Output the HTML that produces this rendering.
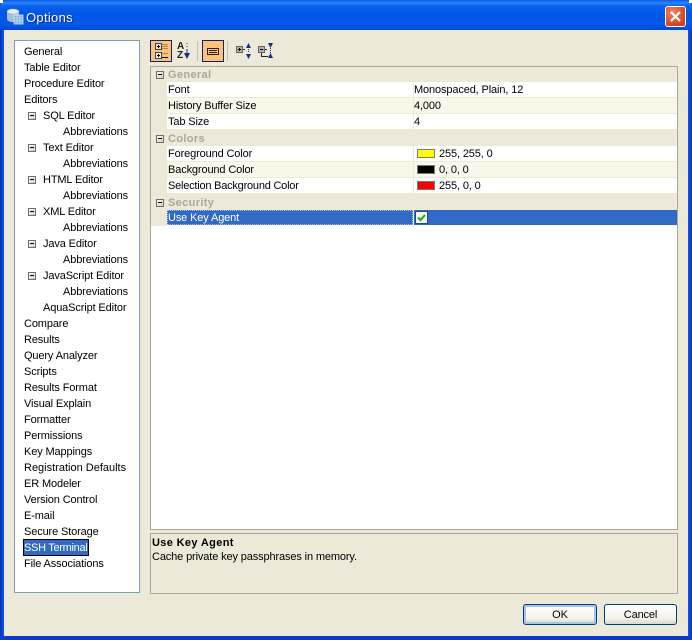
<!DOCTYPE html>
<html><head><meta charset="utf-8">
<style>
html,body{margin:0;padding:0;width:692px;height:640px;overflow:hidden;background:#ece9d8}
body{font:11px/16px "Liberation Sans",sans-serif;color:#000;position:relative;letter-spacing:-.13px}
.a{position:absolute}
.t{position:absolute;white-space:nowrap;height:16px;line-height:16px;margin-top:1px}
.box{position:absolute;width:8px;height:8px;box-sizing:border-box;border:1px solid #6e6e6e;background:linear-gradient(135deg,#fff,#cfcbbd)}
.box:after{content:"";position:absolute;left:1px;top:2px;width:4px;height:1px;background:#000}
.row{position:absolute;left:167px;width:510px;height:15px;background:#fff;border-bottom:1px solid #ece9d8}
.row.alt{background:#f7f8e8}
.sw{position:absolute;left:417px;width:16px;height:7px;border:1px solid #7a7a7a}
.g{position:absolute;left:168px;font-weight:bold;color:#aca899;line-height:16px;height:16px;margin-top:1px;letter-spacing:.35px}
.btn{position:absolute;top:604px;width:74px;height:21px;box-sizing:border-box;border:1px solid #003c74;border-radius:3px;background:linear-gradient(#fff,#f3f2ea 70%,#dcd8ca);text-align:center;line-height:20px}
</style></head><body>
<!-- window frame -->
<div class="a" style="left:0;top:0;width:692px;height:640px;background:#0a4fe0"></div>
<div class="a" style="left:0;top:0;width:692px;height:30px;border-radius:7px 7px 0 0;background:linear-gradient(#0a5ae8 0,#2a86f8 3px,#0a62ee 6px,#0055e6 14px,#0258ea 24px,#0049d8 30px)"></div>
<div class="a" style="left:0;top:0;width:3px;height:3px;background:#fff"></div>
<div class="a" style="right:0;top:0;width:3px;height:3px;background:#fff"></div>
<div class="a" style="left:4px;top:30px;width:684px;height:606px;background:#ece9d8"></div>
<div class="a" style="left:0;top:636px;width:692px;height:4px;background:#0a3cc8"></div>
<div class="a" style="left:0;top:30px;width:2px;height:606px;background:#0838c0"></div>
<div class="a" style="right:0;top:30px;width:2px;height:606px;background:#0838c0"></div>

<!-- title icon -->
<svg class="a" style="left:6px;top:8px" width="18" height="17" viewBox="0 0 18 17">
<ellipse cx="7" cy="3.5" rx="6" ry="2.5" fill="#e8f0f4" stroke="#9ab" stroke-width=".5"/>
<path d="M1 3.5V11C1 13 4 14 7 14H13V3.5C13 5 10 6 7 6S1 5 1 3.5Z" fill="#a4c0d4"/>
<rect x="8" y="7" width="9" height="9" fill="#7fb0e8" stroke="#d8e8f8" stroke-width=".8"/>
<path d="M8 10H17M8 13H17M11 7V16M14 7V16" stroke="#d8e8f8" stroke-width=".6"/>
</svg>
<div class="t" style="left:26px;top:9px;color:#fff;font-size:13px;text-shadow:1px 1px #0a2c98;letter-spacing:.3px">Options</div>

<!-- close button -->
<div class="a" style="left:665px;top:6px;width:21px;height:21px;box-sizing:border-box;border:1px solid #fff;border-radius:3px;background:radial-gradient(circle at 35% 30%,#ea8c6c,#d9502c 55%,#c03a14)"></div>
<svg class="a" style="left:665px;top:6px" width="21" height="21"><path d="M6 6L15 15M15 6L6 15" stroke="#fff" stroke-width="2.2"/></svg>

<!-- tree -->
<div class="a" style="left:14px;top:40px;width:124px;height:551px;background:#fff;border:1px solid #7f9db9"></div>
<div class="t" style="left:24px;top:43px">General</div>
<div class="t" style="left:24px;top:59px">Table Editor</div>
<div class="t" style="left:24px;top:75px">Procedure Editor</div>
<div class="t" style="left:24px;top:91px">Editors</div>
<div class="box" style="left:28px;top:112px"></div><div class="t" style="left:43px;top:107px">SQL Editor</div>
<div class="t" style="left:63px;top:123px">Abbreviations</div>
<div class="box" style="left:28px;top:144px"></div><div class="t" style="left:43px;top:139px">Text Editor</div>
<div class="t" style="left:63px;top:155px">Abbreviations</div>
<div class="box" style="left:28px;top:176px"></div><div class="t" style="left:43px;top:171px">HTML Editor</div>
<div class="t" style="left:63px;top:187px">Abbreviations</div>
<div class="box" style="left:28px;top:208px"></div><div class="t" style="left:43px;top:203px">XML Editor</div>
<div class="t" style="left:63px;top:219px">Abbreviations</div>
<div class="box" style="left:28px;top:240px"></div><div class="t" style="left:43px;top:235px">Java Editor</div>
<div class="t" style="left:63px;top:251px">Abbreviations</div>
<div class="box" style="left:28px;top:272px"></div><div class="t" style="left:43px;top:267px">JavaScript Editor</div>
<div class="t" style="left:63px;top:283px">Abbreviations</div>
<div class="t" style="left:43px;top:299px">AquaScript Editor</div>
<div class="t" style="left:24px;top:315px">Compare</div>
<div class="t" style="left:24px;top:331px">Results</div>
<div class="t" style="left:24px;top:347px">Query Analyzer</div>
<div class="t" style="left:24px;top:363px">Scripts</div>
<div class="t" style="left:24px;top:379px">Results Format</div>
<div class="t" style="left:24px;top:395px">Visual Explain</div>
<div class="t" style="left:24px;top:411px">Formatter</div>
<div class="t" style="left:24px;top:427px">Permissions</div>
<div class="t" style="left:24px;top:443px">Key Mappings</div>
<div class="t" style="left:24px;top:459px;letter-spacing:0">Registration Defaults</div>
<div class="t" style="left:24px;top:475px">ER Modeler</div>
<div class="t" style="left:24px;top:491px">Version Control</div>
<div class="t" style="left:24px;top:507px">E-mail</div>
<div class="t" style="left:24px;top:523px">Secure Storage</div>
<div class="a" style="left:23px;top:539px;width:64px;height:15px;background:#316ac5;border:1px solid #000"></div>
<div class="t" style="left:24px;top:539px;color:#fff;letter-spacing:-.3px">SSH Terminal</div>
<div class="t" style="left:24px;top:555px">File Associations</div>

<!-- toolbar -->
<div class="a" style="left:150px;top:40px;width:20px;height:20px;border:1px solid #0a246a;background:#ffc078"></div>
<svg class="a" style="left:150px;top:40px" width="22" height="22">
<rect x="5.500" y="3.500" width="6" height="6" fill="#ddd" stroke="#444"/><path d="M7 6.500H10M8.500 5V8" stroke="#000"/>
<rect x="5.500" y="12.500" width="6" height="6" fill="#eee" stroke="#444"/><path d="M7 15.500H10M8.500 14V17" stroke="#000"/>
<path d="M12 4.500H18M12 6.500H18M12 8.500H18" stroke="#a88a58"/><path d="M12 13.500H18" stroke="#a88a58"/><path d="M12 17.500H18" stroke="#000"/>
</svg>
<div class="t" style="left:177px;top:41px;font-size:10px;font-weight:bold;line-height:10px;height:10px;color:#222;letter-spacing:0">A</div>
<div class="t" style="left:177px;top:50px;font-size:10px;font-weight:bold;line-height:10px;height:10px;color:#222;letter-spacing:0">Z</div>
<svg class="a" style="left:184px;top:42px" width="8" height="20"><path d="M3 1V2M3 4V5M3 7V12" stroke="#1a2a90"/><path d="M0 11H6L3 17Z" fill="#1a2a90"/></svg>
<div class="a" style="left:197px;top:41px;width:1px;height:20px;background:#c4c0b0"></div>
<div class="a" style="left:202px;top:40px;width:20px;height:20px;border:1px solid #0a246a;background:#ffc078"></div>
<svg class="a" style="left:202px;top:40px" width="22" height="22"><rect x="5.500" y="8.500" width="11" height="6" fill="none" stroke="#222"/><path d="M7 10.500H15M7 12.500H15" stroke="#222"/></svg>
<div class="a" style="left:227px;top:41px;width:1px;height:20px;background:#c4c0b0"></div>
<svg class="a" style="left:235px;top:42px" width="40" height="20">
<rect x="1.500" y="4.500" width="6" height="6" fill="#b0b0a8" stroke="#666"/><path d="M3 7.500H6M4.500 6V9" stroke="#000"/>
<path d="M8 7.500H10" stroke="#333"/>
<path d="M11 6L13.500 1L16 6Z M11 12L13.500 17L16 12Z" fill="#1a2a90"/><path d="M13.500 7V11" stroke="#1a2a90" stroke-dasharray="1 1"/>
<rect x="23.500" y="4.500" width="6" height="6" fill="#b0b0a8" stroke="#666"/><path d="M25 7.500H28" stroke="#000"/>
<path d="M30 7.500H32M26.500 11V14.500H33" stroke="#222" fill="none"/>
<path d="M33 1H38L35.500 6Z M33 16H38L35.500 11Z" fill="#1a2a90"/><path d="M35.500 6V11" stroke="#1a2a90" stroke-dasharray="1 1"/>
</svg>

<!-- property grid -->
<div class="a" style="left:150px;top:66px;width:526px;height:462px;background:#fff;border:1px solid #aca899"></div>
<div class="a" style="left:151px;top:67px;width:526px;height:15px;background:#ece9d8"></div>
<div class="a" style="left:151px;top:82px;width:16px;height:48px;background:#ece9d8"></div>
<div class="a" style="left:151px;top:130px;width:526px;height:16px;background:#ece9d8"></div>
<div class="a" style="left:151px;top:146px;width:16px;height:48px;background:#ece9d8"></div>
<div class="a" style="left:151px;top:194px;width:526px;height:16px;background:#ece9d8"></div>
<div class="a" style="left:151px;top:210px;width:16px;height:16px;background:#ece9d8"></div>

<div class="box" style="left:156px;top:71px"></div><div class="g" style="top:66px">General</div>
<div class="row" style="top:82px"></div>
<div class="row alt" style="top:98px"></div>
<div class="row" style="top:114px"></div>
<div class="box" style="left:156px;top:135px"></div><div class="g" style="top:130px">Colors</div>
<div class="row" style="top:146px"></div>
<div class="row alt" style="top:162px"></div>
<div class="row" style="top:178px"></div>
<div class="box" style="left:156px;top:199px"></div><div class="g" style="top:194px">Security</div>
<div class="a" style="left:167px;top:210px;width:510px;height:15px;background:#316ac5"></div>
<div class="a" style="left:413px;top:82px;width:1px;height:112px;background:#ece9d8"></div>
<div class="a" style="left:413px;top:210px;width:1px;height:15px;background:#ece9d8"></div>
<div class="a" style="left:167px;top:210px;width:244px;height:13px;border:1px dotted #a8c4ec"></div>

<div class="t" style="left:168px;top:81px">Font</div><div class="t" style="left:414px;top:81px">Monospaced, Plain, 12</div>
<div class="t" style="left:168px;top:97px">History Buffer Size</div><div class="t" style="left:414px;top:97px">4,000</div>
<div class="t" style="left:168px;top:113px">Tab Size</div><div class="t" style="left:414px;top:113px">4</div>
<div class="t" style="left:168px;top:145px">Foreground Color</div><div class="sw" style="top:149px;background:#ff0"></div><div class="t" style="left:439px;top:145px">255, 255, 0</div>
<div class="t" style="left:168px;top:161px">Background Color</div><div class="sw" style="top:165px;background:#000"></div><div class="t" style="left:439px;top:161px">0, 0, 0</div>
<div class="t" style="left:168px;top:177px;letter-spacing:-.22px">Selection Background Color</div><div class="sw" style="top:181px;background:#f00"></div><div class="t" style="left:439px;top:177px">255, 0, 0</div>
<div class="t" style="left:168px;top:209px;color:#fff">Use Key Agent</div>
<div class="a" style="left:415px;top:211px;width:11px;height:11px;border:1px solid #1c5180;background:#f4f4ee"></div>
<svg class="a" style="left:415px;top:211px" width="13" height="13"><path d="M3 6.500L5.500 9L10 4" fill="none" stroke="#21a121" stroke-width="2"/></svg>

<!-- description -->
<div class="a" style="left:150px;top:533px;width:526px;height:59px;border:1px solid #aca899"></div>
<div class="t" style="left:152px;top:534px;font-weight:bold;letter-spacing:.35px">Use Key Agent</div>
<div class="t" style="left:152px;top:548px">Cache private key passphrases in memory.</div>

<!-- buttons -->
<div class="btn" style="left:523px;box-shadow:inset 0 0 0 2px #a8c4ee">OK</div>
<div class="btn" style="left:604px;width:73px">Cancel</div>
</body></html>
